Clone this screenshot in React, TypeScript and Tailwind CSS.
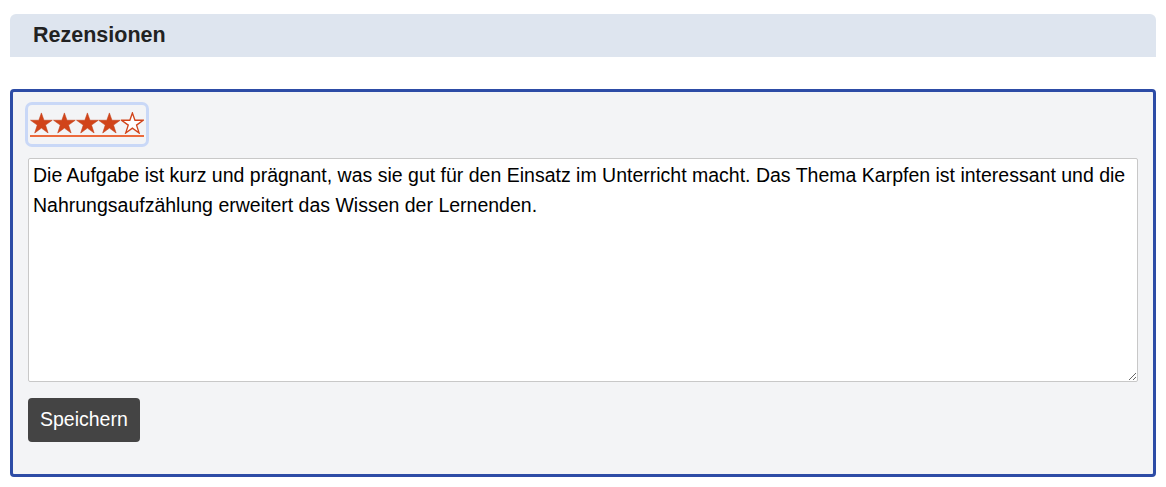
import { useState } from "react";

const STAR_POINTS =
  "12,0.6 14.69,8.29 23.41,8.29 16.36,13.42 19.05,21.71 12,16.58 4.95,21.71 7.64,13.42 0.59,8.29 9.31,8.29";

function Star({ filled }: { filled: boolean }) {
  return (
    <svg viewBox="0 0 24 22.4" className="block h-[22px] w-[22.8px]">
      <polygon
        points={STAR_POINTS}
        fill={filled ? "#d1441a" : "#ffffff"}
        stroke={filled ? "#c53f17" : "#d1441a"}
        strokeWidth={filled ? 0.6 : 1.4}
        strokeLinejoin="miter"
      />
    </svg>
  );
}

export default function App() {
  const [rating] = useState(4);
  const [text, setText] = useState(
    "Die Aufgabe ist kurz und prägnant, was sie gut für den Einsatz im Unterricht macht. Das Thema Karpfen ist interessant und die Nahrungsaufzählung erweitert das Wissen der Lernenden."
  );

  return (
    <div className="min-h-screen bg-white px-[10px] pt-[14px] font-['Liberation_Sans',Arial,sans-serif] text-[#111]">
      {/* Header */}
      <div className="flex h-[43px] items-center rounded-t-[6px] bg-[#dee5ef] pl-[23px]">
        <h2 className="-mt-[1px] text-[21.5px] font-bold text-[#222]">Rezensionen</h2>
      </div>

      {/* Review card */}
      <div className="mt-[32px] rounded-[4px] border-[3px] border-[#2d4ca6] bg-[#f3f4f6] px-[15px] pt-[13px] pb-[32px]">
        <div className="inline-block rounded-[4px] px-[2px] pt-[7px] pb-[7px] ring-[3px] ring-[#c9d8f7]">
          <div className="flex border-b-[2px] border-[#ec6a3c] pb-[1px]">
            {[1, 2, 3, 4, 5].map((i) => (
              <Star key={i} filled={i <= rating} />
            ))}
          </div>
        </div>

        <textarea
          value={text}
          onChange={(e) => setText(e.target.value)}
          className="mt-[14px] block h-[224px] w-full rounded-[2px] border border-[#c8c8c8] bg-white px-[4px] pt-[1px] text-[19.5px] leading-[30px] text-black outline-none"
        />

        <button className="mt-[16px] flex h-[44px] items-center rounded-[4px] bg-[#444444] px-[12px] text-[19.5px] text-white">
          Speichern
        </button>
      </div>
    </div>
  );
}
